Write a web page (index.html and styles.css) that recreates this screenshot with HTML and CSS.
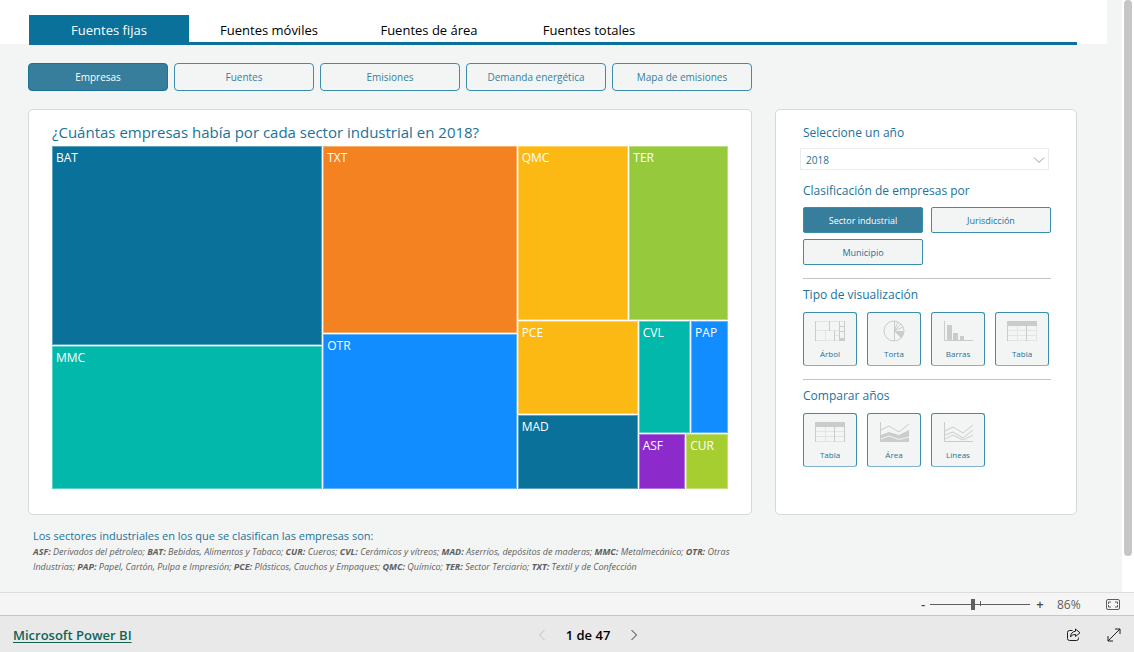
FILE: index.html
```html
<!DOCTYPE html>
<html lang="es">
<head>
<meta charset="utf-8">
<meta name="viewport" content="width=device-width, initial-scale=1">
<title>Inventario de emisiones - Fuentes fijas</title>
<link rel="stylesheet" href="styles.css">
</head>
<body>
<div class="viewer">
  <div class="report">
    <header class="report-header">
      <nav class="tabs" aria-label="Fuentes">
        <button class="tab tab-active" type="button">Fuentes fijas</button>
        <button class="tab" type="button">Fuentes móviles</button>
        <button class="tab" type="button">Fuentes de área</button>
        <button class="tab" type="button">Fuentes totales</button>
      </nav>
    </header>
    <nav class="sections" aria-label="Secciones">
      <button class="pill pill-active" type="button">Empresas</button>
      <button class="pill" type="button">Fuentes</button>
      <button class="pill" type="button">Emisiones</button>
      <button class="pill" type="button">Demanda energética</button>
      <button class="pill" type="button">Mapa de emisiones</button>
    </nav>
    <main class="panels">
      <section class="card chart-card">
        <h1 class="chart-title">¿Cuántas empresas había por cada sector industrial en 2018?</h1>
        <div class="treemap">
          <div class="tm-col tm-c1">
            <div class="leaf navy s201">BAT</div>
            <div class="leaf teal s142">MMC</div>
          </div>
          <div class="tm-col tm-c2">
            <div class="leaf orange s188">TXT</div>
            <div class="leaf blue s155">OTR</div>
          </div>
          <div class="tm-col tm-c3">
            <div class="tm-row s175">
              <div class="leaf amber s112">QMC</div>
              <div class="leaf green s99">TER</div>
            </div>
            <div class="tm-row s168">
              <div class="tm-col s121">
                <div class="leaf amber s94">PCE</div>
                <div class="leaf navy s74">MAD</div>
              </div>
              <div class="tm-col s90">
                <div class="tm-row s112">
                  <div class="leaf teal s54">CVL</div>
                  <div class="leaf blue s36">PAP</div>
                </div>
                <div class="tm-row s56">
                  <div class="leaf purple s48">ASF</div>
                  <div class="leaf lime s42">CUR</div>
                </div>
              </div>
            </div>
          </div>
        </div>
      </section>
      <aside class="card filters">
        <label class="filter-title" for="year">Seleccione un año</label>
        <div class="select-box">
          <select class="year" id="year"><option>2018</option></select>
          <svg class="chevron" viewBox="0 0 12 8" aria-hidden="true"><path d="M1 1.5l5 5 5-5"/></svg>
        </div>
        <h2 class="filter-title">Clasificación de empresas por</h2>
        <div class="choices">
          <button class="choice choice-active" type="button">Sector industrial</button>
          <button class="choice" type="button">Jurisdicción</button>
          <button class="choice" type="button">Municipio</button>
        </div>
        <hr class="rule">
        <h2 class="filter-title">Tipo de visualización</h2>
        <div class="tiles">
          <button class="tile" type="button">
            <svg class="tile-icon" viewBox="0 0 30 22" aria-hidden="true">
              <path class="faint" d="M1 1.500h28M1 20.500h24M1 10.500h24M10.500 11v10M20 15.500h5"/>
              <path d="M.5 1v20M14.500 1v10M24.500 1v20M19.500 11v10M29.500 1v20M25 6.500h4M25 11.500h4"/>
              <path class="solid" d="M24 18h6v3h-6z"/>
            </svg>Árbol</button>
          <button class="tile" type="button">
            <svg class="tile-icon" viewBox="0 0 30 22" aria-hidden="true">
              <circle cx="15" cy="11" r="10"/>
              <path d="M15.500 1v20M15 11l4-9M15 11l7-7M15 11l9-4"/>
              <path class="solid" d="M15 11h10a10 10 0 0 1-3 7z"/>
            </svg>Torta</button>
          <button class="tile" type="button">
            <svg class="tile-icon" viewBox="0 0 30 22" aria-hidden="true">
              <path d="M1.500 1v19.500H30"/>
              <path class="solid" d="M4 5h5v15H4zM10 13h5v7h-5zM17 16h4v4h-4z"/>
            </svg>Barras</button>
          <button class="tile" type="button">
            <svg class="tile-icon" viewBox="0 0 30 22" aria-hidden="true">
              <path class="faint" d="M1 10.500h28M1 15.500h28M1 20.500h28M10.500 5v16M29.500 5v16"/>
              <path d="M.5 5v16M19.500 5v16"/>
              <path class="solid" d="M0 1h30v5H0z"/>
            </svg>Tabla</button>
        </div>
        <hr class="rule">
        <h2 class="filter-title">Comparar años</h2>
        <div class="tiles">
          <button class="tile" type="button">
            <svg class="tile-icon" viewBox="0 0 30 22" aria-hidden="true">
              <path class="faint" d="M1 10.500h28M1 15.500h28M1 20.500h28M10.500 5v16"/>
              <path d="M.5 5v16M19.500 5v16M29.500 5v16"/>
              <path class="solid" d="M0 1h30v5H0z"/>
            </svg>Tabla</button>
          <button class="tile" type="button">
            <svg class="tile-icon" viewBox="0 0 30 22" aria-hidden="true">
              <path d="M1.500 1v19.500H30M2 9l8-4 10 6 10-8"/>
              <path class="solid" d="M2 14l8-3 10 3 10-5v12H2z"/>
              <path class="cut" d="M2 18l8-3 10 3.500L30 16"/>
            </svg>Área</button>
          <button class="tile" type="button">
            <svg class="tile-icon" viewBox="0 0 30 22" aria-hidden="true">
              <path d="M1.500 1v19.500H30M2 10l8-4 10 6 10-8M2 14l8-3 10 6 10-8M2 18l8-4 10 5 10-5"/>
            </svg>Líneas</button>
        </div>
      </aside>
    </main>
    <section class="notes">
      <h2 class="notes-title">Los sectores industriales en los que se clasifican las empresas son:</h2>
      <p class="notes-text"><b>ASF:</b> Derivados del pétroleo; <b>BAT:</b> Bebidas, Alimentos y Tabaco; <b>CUR:</b> Cueros; <b>CVL:</b> Cerámicos y vítreos; <b>MAD:</b> Aserríos, depósitos de maderas; <b>MMC:</b> Metalmecánico; <b>OTR:</b> Otras Industrias; <b>PAP:</b> Papel, Cartón, Pulpa e Impresión; <b>PCE:</b> Plásticos, Cauchos y Empaques; <b>QMC:</b> Químico; <b>TER:</b> Sector Terciario; <b>TXT:</b> Textil y de Confección</p>
    </section>
  </div>
  <div class="scroll-track"><div class="scroll-thumb"></div></div>
</div>
<div class="zoom-bar">
  <button class="zoom-step" type="button" aria-label="Alejar">-</button>
  <div class="slider">
    <input class="zoom-range" type="range" min="0" max="100" value="43" aria-label="Zoom">
    <span class="zoom-tick"></span>
  </div>
  <button class="zoom-step" type="button" aria-label="Acercar">+</button>
  <output class="zoom-value">86%</output>
  <button class="icon-button" type="button" aria-label="Ajustar a la página">
    <svg class="fit-icon" viewBox="0 0 14 11"><rect x=".5" y=".5" width="13" height="10" rx="1.500"/><path d="M2.500 5V3H5M9 3h2.500v2M2.500 6v2H5M9 8h2.500V6"/></svg>
  </button>
</div>
<footer class="footer">
  <div class="brand"><a class="brand-link" href="#">Microsoft Power BI</a></div>
  <div class="pager">
    <button class="icon-button pager-off" type="button" aria-label="Página anterior" disabled><svg class="arrow" viewBox="0 0 8 12"><path d="M6.500 1l-5 5 5 5"/></svg></button>
    <span class="page-count">1 de 47</span>
    <button class="icon-button" type="button" aria-label="Página siguiente"><svg class="arrow" viewBox="0 0 8 12"><path d="M1.500 1l5 5-5 5"/></svg></button>
  </div>
  <div class="actions">
    <button class="icon-button" type="button" aria-label="Compartir"><svg class="action-icon" viewBox="0 0 14 14"><path d="M5.500 2.500h-3a2 2 0 0 0-2 2v6a2 2 0 0 0 2 2h7a2 2 0 0 0 2-2V9.500M8.500 1l4.500 3.800-4.500 3.700V6.500C6 6.500 4.500 7.200 3.500 9c0-3 1.800-5.500 5-5.800z"/></svg></button>
    <button class="icon-button" type="button" aria-label="Pantalla completa"><svg class="action-icon" viewBox="0 0 14 14"><path d="M1 13L13 1M8 1h5v5M1 8v5h5"/></svg></button>
  </div>
</footer>
</body>
</html>
```

FILE: styles.css
```css
* { box-sizing: border-box; }

body {
  margin: 0;
  min-height: 100vh;
  display: flex;
  flex-direction: column;
  font-family: "Open Sans", "Noto Sans", sans-serif;
  font-size: 13px;
  color: #000;
  background: #f3f5f4;
}

h1, h2, p { margin: 0; font-weight: 400; }
button, select { font-family: inherit; margin: 0; padding: 0; }
button { border: 0; background: none; cursor: pointer; }
svg { display: block; fill: none; }

.viewer { flex: 1; display: flex; }

.report {
  flex: 1;
  min-width: 0;
  padding-right: 15px;
  padding-bottom: 18px;
  display: flex;
  flex-direction: column;
}

.report-header {
  padding: 15px 30px 0 29px;
  background: linear-gradient(#fff, #fff) no-repeat 0 0 / 100% 44px;
}

.tabs { display: flex; border-bottom: 3px solid #09719a; }
.tab { width: 160px; height: 27px; padding-top: 3px; font-size: 13px; }
.tab-active { background: #09719a; color: #fff; }

.sections { display: flex; gap: 6px; padding: 18px 30px 18px 28px; }

.pill {
  width: 140px;
  height: 28px;
  border: 1px solid #3a8dac;
  border-radius: 4px;
  font-size: 10px;
  color: #367f9d;
}

.pill-active, .choice-active {
  background: #367e9b;
  border-color: #1c7196;
  color: #fff;
  font-weight: 500;
}

.panels {
  flex: 1;
  display: grid;
  grid-template-columns: 724fr 302fr;
  gap: 23px;
  padding: 0 30px 0 28px;
}

.card {
  background: #fff;
  border: 1px solid #d5d8d7;
  border-radius: 5px;
}

.chart-card {
  display: flex;
  flex-direction: column;
  padding: 11px 23px 25px 23px;
}

.chart-title { font-size: 15px; line-height: 22px; margin-bottom: 3px; color: #19739b; }

.treemap { flex: 1; min-height: 343px; display: flex; gap: 1px; }
.tm-col { display: flex; flex-direction: column; gap: 1px; min-width: 0; }
.tm-row { display: flex; gap: 1px; min-height: 0; }
.tm-c1 { flex: 271 1 0; }
.tm-c2 { flex: 194 1 0; }
.tm-c3 { flex: 211 1 0; }

.leaf {
  min-width: 0;
  padding: 3px;
  border: 1px solid rgba(255, 255, 255, 0.35);
  color: #fff;
  font-size: 12px;
  line-height: 16px;
}

.s201 { flex: 201 1 0; }
.s188 { flex: 188 1 0; }
.s175 { flex: 175 1 0; }
.s168 { flex: 168 1 0; }
.s155 { flex: 155 1 0; }
.s142 { flex: 142 1 0; }
.s121 { flex: 121 1 0; }
.s112 { flex: 112 1 0; }
.s99 { flex: 99 1 0; }
.s94 { flex: 94 1 0; }
.s90 { flex: 90 1 0; }
.s74 { flex: 74 1 0; }
.s56 { flex: 56 1 0; }
.s54 { flex: 54 1 0; }
.s48 { flex: 48 1 0; }
.s42 { flex: 42 1 0; }
.s36 { flex: 36 1 0; }

.navy { background: #09719a; }
.teal { background: #01b8aa; }
.orange { background: #f58220; }
.blue { background: #118dff; }
.amber { background: #fdb913; }
.green { background: #97c93d; }
.purple { background: #8d2acb; }
.lime { background: #a6ce31; }

.filters { padding: 14px 25px 20px 27px; }
.filter-title { display: block; font-size: 12px; line-height: 18px; color: #19739b; }

.select-box { position: relative; margin: 6px 2px 12px -3px; }

.year {
  display: block;
  width: 100%;
  height: 22px;
  padding: 2px 0 0 5px;
  appearance: none;
  border: 1px solid #ebebeb;
  border-radius: 0;
  background: #fff;
  font-size: 10px;
  color: #19739b;
}

.chevron {
  position: absolute;
  right: 4px;
  top: 8px;
  width: 12px;
  height: 8px;
  stroke: #7ba6bd;
}

.choices {
  display: grid;
  grid-template-columns: 1fr 1fr;
  gap: 6px 8px;
  margin: 7px 0 13px;
}

.choice {
  height: 26px;
  border: 1px solid #3a8dac;
  border-radius: 2px;
  background: #f3f5f4;
  font-size: 9px;
  color: #19739b;
}

.choice-active { background: #367e9b; color: #fff; }

.rule { height: 1px; margin: 0 0 7px; border: 0; background: #c3c3c3; }

.tiles { display: grid; grid-template-columns: repeat(4, 54px); gap: 10px; margin: 8px 0 13px; }

.tile {
  height: 54px;
  padding-top: 7px;
  display: flex;
  flex-direction: column;
  align-items: center;
  gap: 6px;
  border: 1px solid #3a8dac;
  border-bottom-color: #7fb5cb;
  border-radius: 3px;
  background: #f3f5f4;
  font-size: 8px;
  line-height: 12px;
  color: #19739b;
}

.tile-icon { width: 30px; height: 22px; stroke: #cbcbcb; }
.faint { stroke: #e3e4e4; }
.solid { fill: #cbcbcb; stroke: none; }
.cut { stroke: #f3f5f4; }

.notes { padding: 13px 340px 0 33px; }
.notes-title { font-size: 11px; line-height: 16px; color: #19739b; }
.notes-text { font-size: 9px; line-height: 15px; font-style: italic; color: #605e5c; }

.scroll-track { width: 12px; background: #fff; padding: 0 2px; }
.scroll-thumb { height: 94%; border-radius: 4px; background: #c6c6c6; }

.zoom-bar {
  height: 23px;
  padding-right: 14px;
  display: flex;
  align-items: center;
  justify-content: flex-end;
  border-top: 1px solid #dedcdc;
  background: #f5f5f5;
  color: #605e5c;
}

.zoom-step { width: 14px; font-size: 13px; line-height: 16px; font-weight: 600; color: #484644; }
.slider { position: relative; width: 100px; height: 12px; margin: 0 3px 0 0; }

.zoom-range {
  display: block;
  width: 100%;
  height: 12px;
  margin: 0;
  appearance: none;
  background: linear-gradient(#605e5c, #605e5c) no-repeat 0 50% / 100% 1px;
}

.zoom-range::-webkit-slider-thumb {
  appearance: none;
  width: 4px;
  height: 11px;
  background: #605e5c;
}

.zoom-tick {
  position: absolute;
  left: 50%;
  top: 3px;
  width: 1px;
  height: 5px;
  background: #605e5c;
}

.zoom-value { width: 35px; margin-left: 10px; font-size: 12px; }
.fit-icon { width: 14px; height: 11px; margin-left: 14px; stroke: #605e5c; }

.footer {
  height: 37px;
  padding: 2px 13px 0;
  display: grid;
  grid-template-columns: 1fr auto 1fr;
  align-items: center;
  border-top: 1px solid #c8c6c4;
  background: #e9e9e9;
}

.brand-link { font-size: 13px; font-weight: 600; color: #0f6457; text-underline-offset: 2px; }
.pager { display: flex; align-items: center; gap: 20px; padding-left: 42px; }
.page-count { font-size: 13px; font-weight: 600; }
.arrow { width: 8px; height: 12px; stroke: #323130; }
.pager-off .arrow { stroke: #c3c3c3; }
.actions { display: flex; justify-content: flex-end; gap: 26px; }
.action-icon { width: 14px; height: 14px; stroke: #201f1e; }
```
